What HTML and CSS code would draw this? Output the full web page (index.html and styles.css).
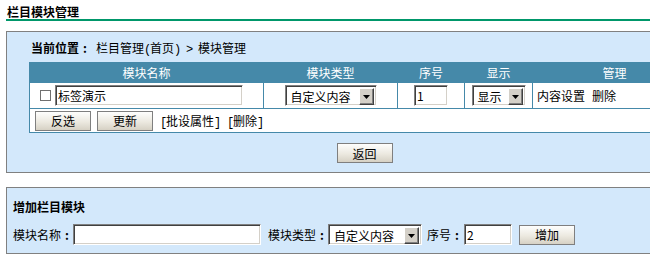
FILE: index.html
```html
<!DOCTYPE html>
<html lang="zh-CN">
<head>
    <meta charset="UTF-8">
    <title>栏目模块管理</title>
    <link rel="stylesheet" href="styles.css">
</head>
<body>
    <div class="page">
        <div class="title">栏目模块管理</div>

        <div class="panel">
            <div class="loc"><b>当前位置<span class="colon">:</span></b><span class="path">栏目管理<span class="asc">(</span>首页<span class="asc">) &gt; </span>模块管理</span></div>
            <table class="grid">
                <tr class="head">
                    <th class="c1">模块名称</th>
                    <th class="c2">模块类型</th>
                    <th class="c3">序号</th>
                    <th class="c4">显示</th>
                    <th class="c5">管理</th>
                </tr>
                <tr class="row">
                    <td>
                        <div class="namecell">
                            <input type="checkbox" class="chk">
                            <input type="text" class="txt w188" value="标签演示">
                        </div>
                    </td>
                    <td class="mid">
                        <span class="sel w92"><span class="val">自定义内容</span><span class="arr"><svg width="7" height="4" viewBox="0 0 7 4"><path d="M0 0h7L3.5 4z"/></svg></span></span>
                    </td>
                    <td class="mid"><input type="text" class="txt w34" value="1"></td>
                    <td class="mid">
                        <span class="sel w54"><span class="val">显示</span><span class="arr"><svg width="7" height="4" viewBox="0 0 7 4"><path d="M0 0h7L3.5 4z"/></svg></span></span>
                    </td>
                    <td class="ops"><a href="#">内容设置</a><a href="#">删除</a></td>
                </tr>
                <tr class="foot">
                    <td colspan="5">
                        <div class="footcell">
                            <button class="btn">反选</button>
                            <button class="btn">更新</button>
                            <a href="#" class="lnk"><span class="asc">[</span>批设属性<span class="asc">]</span></a><span class="asc"> </span><a href="#" class="lnk"><span class="asc">[</span>删除<span class="asc">]</span></a>
                        </div>
                    </td>
                </tr>
            </table>
            <div class="back"><button class="btn">返回</button></div>
        </div>

        <div class="panel add">
            <div class="addhead">增加栏目模块</div>
            <div class="addrow">
                <span>模块名称<span class="colon">:</span></span>
                <input type="text" class="txt w188" value="">
                <span class="lab">模块类型<span class="colon">:</span></span>
                <span class="sel w94"><span class="val">自定义内容</span><span class="arr"><svg width="7" height="4" viewBox="0 0 7 4"><path d="M0 0h7L3.5 4z"/></svg></span></span>
                <span class="lab2">序号<span class="colon">:</span></span>
                <input type="text" class="txt w48" value="2">
                <button class="btn ml7">增加</button>
            </div>
        </div>
    </div>
</body>
</html>
```

FILE: styles.css
```css
*{margin: 0;padding: 0;}
html,body{overflow: hidden;}
body{font: 12px "Noto Sans CJK SC","Liberation Sans",sans-serif;color: #000;background: #fff;}
a{color: #000;text-decoration: none;}
.page{width: 740px;}

/* 半角字符按宋体的 6px 宽度排 */
.asc{font-family: "Liberation Mono",monospace;letter-spacing: -1.2px;white-space: pre;}
/* 全角冒号：占一个字宽，居中 */
.colon{display: inline-block;width: 12px;text-align: center;font-weight: bold;}

.title{margin-left: 6px;padding: 4px 0 0 1px;height: 15px;line-height: 15px;font-weight: bold;border-bottom: 2px solid #00976a;}

.panel{margin: 10px 0 0 6px;width: 715px;border: 1px solid #808080;background: #d3e8fb;}
.loc{height: 30px;line-height: 32px;padding-left: 24px;}
.path{margin-left: 5px;}

.grid{margin-left: 22px;width: 668px;border-collapse: collapse;table-layout: fixed;background: #fff;}
.grid th,.grid td{border: 1px solid #4589a9;}
.grid th{background: #4589a9;color: #fff;font-weight: normal;height: 19px;line-height: 19px;}
.c1{width: 233px;}
.c2{width: 133px;}
.c3{width: 66px;}
.c4{width: 67px;}
.row td{height: 25px;}
.mid{text-align: center;}
.ops{padding-left: 4px;}
.ops a{margin-right: 7px;}
.namecell{display: flex;align-items: center;gap: 4px;padding-left: 10px;}
.foot td{height: 23px;}
.footcell{display: flex;align-items: center;padding-left: 5px;}
.footcell .btn{margin-right: 6px;}
.lnk{margin-left: 1px;}

.chk{appearance: none;width: 11px;height: 11px;border: 1px solid #707070;background: #fff;}

.txt{box-sizing: border-box;height: 21px;border: 1px solid;border-color: #808080 #fff #fff #808080;box-shadow: inset 1px 1px #404040, inset -1px -1px #d4d0c8;padding: 0 2px;font: inherit;background: #fff;outline: none;vertical-align: middle;}
.w188{width: 188px;}
.w34{width: 34px;}
.w48{width: 48px;}

.sel{display: inline-flex;box-sizing: border-box;height: 21px;border: 1px solid;border-color: #808080 #fff #fff #808080;box-shadow: inset 1px 1px #404040, inset -1px -1px #d4d0c8;padding: 2px;background: #fff;vertical-align: middle;text-align: left;}
.sel .val{flex: 1;padding-left: 3px;line-height: 17px;}
.sel .arr{box-sizing: border-box;width: 15px;height: 17px;background: #d4d0c8;border: 1px solid;border-color: #fff #404040 #404040 #fff;box-shadow: inset -1px -1px #808080;display: flex;align-items: center;justify-content: center;}
.w92{width: 92px;}
.w94{width: 94px;}
.w54{width: 54px;}

.btn{box-sizing: border-box;width: 56px;height: 20px;border: 1px solid #7f7f7f;background: linear-gradient(#fefefd, #ece9e0 55%, #d6d1c4);font: inherit;color: #000;}
.back{padding: 10px 0 9px;text-align: center;font-size: 0;}
.back .btn{font-size: 12px;}

.add{margin-top: 14px;}
.addhead{padding: 9px 6px 0;line-height: 20px;font-weight: bold;}
.addrow{display: flex;align-items: center;height: 21px;margin-top: 7px;padding: 0 6px 8px;}
.lab{margin-left: 7px;}
.lab2{margin-left: 5px;margin-right: 1px;}
.ml7{margin-left: 7px;}
```
